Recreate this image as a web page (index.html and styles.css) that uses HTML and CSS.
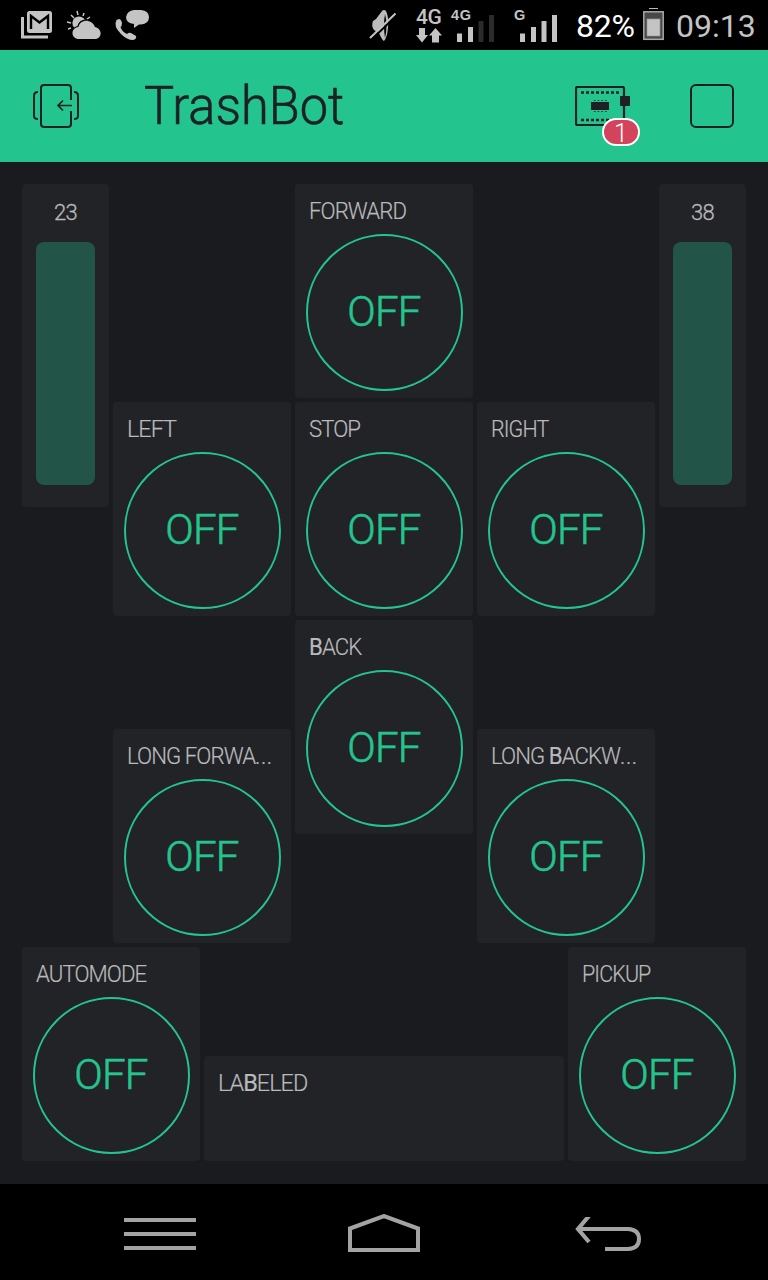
FILE: index.html
```
<!DOCTYPE html>
<html lang="en">
<head>
    <meta charset="UTF-8">
    <meta name="viewport" content="width=device-width, initial-scale=1.0">
    <title>TrashBot</title>
    <link rel="stylesheet" href="styles.css">
</head>
<body>

<div class="status-bar">
    <svg class="notifications" width="130" height="50" viewBox="20 0 130 50">
        <!-- mail -->
        <path d="M22.5 17V37H48" fill="none" stroke="#c4c4c4" stroke-width="3"/>
        <rect x="27" y="11" width="25" height="22" rx="2.5" fill="#c4c4c4"/>
        <path d="M31 29V16L39.5 22.5L48 16V29" fill="none" stroke="#000" stroke-width="2.4"/>
        <!-- weather -->
        <path d="M67 22L71 23M71 15L74 18M77 11L78 15M84 13L83 16M90 17L87 19M68 29L71 28" stroke="#c4c4c4" stroke-width="1.5"/>
        <circle cx="79" cy="23" r="6.6" fill="#c4c4c4"/>
        <path d="M79 39C71 39 70 28 78.500 27C80 18.500 92 18.500 95 27C103 29 102 39 95 39Z" fill="#c4c4c4" stroke="#000" stroke-width="2.400" paint-order="stroke"/>
        <!-- call -->
        <path d="M116.500 20L119 19Q121 19 122 23Q122 26 120.500 27Q122 32 127 34Q129 32 131 33L136 36Q137 39 133 40Q127 40 121 34Q113 26 116.500 20Z" fill="#c4c4c4"/>
        <path d="M134 10H141Q149 11 149 17Q149 24 141 24.500H139L134 28V24Q126 23 126 17Q127 11 134 10Z" fill="#c4c4c4"/>
    </svg>

    <svg class="mute" width="28" height="34" viewBox="369 9 28 34">
        <path d="M373 21L376 19L382 11Q384 9 386 11Q389 17 388 28Q387 38 384 41Q382 40 379 33L374 30Q371 26 373 21Z" fill="#bcbcbc"/>
        <path d="M385 14Q388 25 385 38Q383 25 385 14Z" fill="#000"/>
        <path d="M371 40L397 15" stroke="#000" stroke-width="2"/>
        <path d="M370 38L395.500 13.500" stroke="#c4c4c4" stroke-width="2"/>
    </svg>

    <div class="network">
        <span class="network-name">4G</span>
        <svg width="26" height="15" viewBox="0 0 26 15">
            <path d="M3 0H9V7H12L6 14.500L0 7H3ZM16 14.500H23V7.500H26L19.500 0L13 7.500H16Z" fill="#c4c4c4"/>
        </svg>
    </div>

    <div class="signal signal-4g">
        <span class="signal-name">4G</span>
        <svg width="37" height="28" viewBox="0 0 37 28">
            <path d="M0 18.500H5V27H0ZM11 12H16V27H11Z" fill="#c4c4c4"/>
            <path d="M21.500 6H26.500V27H21.500ZM32 0H37V27H32Z" fill="#2a2b2b"/>
        </svg>
    </div>

    <div class="signal signal-g">
        <span class="signal-name">G</span>
        <svg width="37" height="28" viewBox="0 0 37 28">
            <path d="M0 18.500H5V27H0ZM11 12H16V27H11ZM21.500 6H26.500V27H21.500ZM32 0H37V27H32Z" fill="#c4c4c4"/>
        </svg>
    </div>

    <span class="battery-level">82%</span>
    <svg class="battery" width="21" height="33" viewBox="0 0 21 33">
        <path d="M6 .5H15" stroke="#b8b8b8"/>
        <rect x=".8" y="3.800" width="19.400" height="27.500" fill="#484848" stroke="#a8a8a8" stroke-width="1.500"/>
        <rect x="4" y="11" width="13" height="17" fill="#c4c4c4" stroke="#999" stroke-width=".7"/>
    </svg>
    <span class="clock">09:13</span>
</div>

<div class="header">
    <svg class="exit-icon" width="46" height="44" viewBox="0 0 46 44" fill="none" stroke="#1d2024" stroke-width="2">
        <path d="M38 16V4Q38 1 35 1H11Q8 1 8 4V40Q8 43 11 43H35Q38 43 38 40V27"/>
        <path d="M5 8Q1 8 1 12V32Q1 35 5 35M41 8Q45 8 45 12V32Q45 35 41 35"/>
        <path d="M39 21.500H25M30 16.500L25 21.500L30 26.500" stroke-width="1.700"/>
    </svg>
    <h1 class="title">TrashBot</h1>
    <div class="device">
        <svg width="56" height="40" viewBox="0 0 56 40">
            <rect x="1" y="1" width="48" height="38" rx="1.500" fill="none" stroke="#1d2024" stroke-width="2.200"/>
            <path d="M6 6.500H45M6 34H45" stroke="#1d2024" stroke-width="2.500" stroke-dasharray="3 2"/>
            <path d="M19 14.500H32M19 25.500H32" stroke="#1d2024" stroke-width="1" stroke-dasharray="1.500 2.200"/>
            <path d="M16 16H34V24H16ZM45 10H55V20H45Z" fill="#1d2024"/>
        </svg>
        <span class="badge">1</span>
    </div>
    <div class="stop-icon"></div>
</div>

<div class="board">
    <div class="slider slider-left">
        <span class="value">23</span>
        <div class="track"></div>
    </div>
    <div class="slider slider-right">
        <span class="value">38</span>
        <div class="track"></div>
    </div>

    <div class="widget forward">
        <span class="label">FORWARD</span>
        <div class="switch">OFF</div>
    </div>
    <div class="widget left">
        <span class="label">LEFT</span>
        <div class="switch">OFF</div>
    </div>
    <div class="widget stop">
        <span class="label">STOP</span>
        <div class="switch">OFF</div>
    </div>
    <div class="widget right">
        <span class="label">RIGHT</span>
        <div class="switch">OFF</div>
    </div>
    <div class="widget back">
        <span class="label"><b>B</b>ACK</span>
        <div class="switch">OFF</div>
    </div>
    <div class="widget long-forward">
        <span class="label">LONG FORWA<i>...</i></span>
        <div class="switch">OFF</div>
    </div>
    <div class="widget long-backward">
        <span class="label">LONG <b>B</b>ACKW<i>...</i></span>
        <div class="switch">OFF</div>
    </div>
    <div class="widget automode">
        <span class="label">AUTOMODE</span>
        <div class="switch">OFF</div>
    </div>
    <div class="widget labeled">
        <span class="label">LA<b>B</b>ELED</span>
    </div>
    <div class="widget pickup">
        <span class="label">PICKUP</span>
        <div class="switch">OFF</div>
    </div>
</div>

<div class="nav-bar">
    <svg width="72" height="32" viewBox="0 0 72 32">
        <path d="M0 2H72M0 16H72M0 30H72" stroke="#a3a3a3" stroke-width="4"/>
    </svg>
    <svg class="home" width="72" height="38" viewBox="0 0 72 38">
        <path d="M2 14.500L36 2L70 14.500V36H2Z" fill="none" stroke="#a3a3a3" stroke-width="4"/>
    </svg>
    <svg class="return" width="66" height="34" viewBox="0 0 66 34" fill="none" stroke="#a3a3a3">
        <path d="M4 12H53Q64 12.500 64 22Q64 31.500 53 32H30" stroke-width="4"/>
        <path d="M14 -1L3 12L14 25" stroke-width="4.200"/>
    </svg>
</div>

</body>
</html>
```
FILE: styles.css
```
* {
    box-sizing: border-box;
}
body {
    margin: 0;
    width: 768px;
    height: 1280px;
    background: #1a1b1f;
    font-family: Roboto, 'Open Sans', sans-serif;
    font-weight: 300;
    overflow: hidden;
}
svg {
    display: block;
    flex-shrink: 0;
}
.status-bar {
    display: flex;
    align-items: flex-start;
    height: 50px;
    padding-left: 20px;
    background: #000;
    color: #c4c4c4;
    white-space: nowrap;
}
.mute {
    margin: 9px 0 0 219px;
}
.network {
    width: 28px;
    margin: 7px 0 0 19px;
}
.network-name {
    display: block;
    height: 21px;
    font: 500 21px/20px Roboto, sans-serif;
    letter-spacing: -0.5px;
}
.signal {
    position: relative;
    padding-top: 15px;
}
.signal-4g {
    width: 37px;
    margin-left: 13px;
}
.signal-g {
    width: 37px;
    margin-left: 26px;
}
.signal-name {
    position: absolute;
    top: 7px;
    left: -6px;
    font: bold 14.5px/16px 'Liberation Sans', sans-serif;
    letter-spacing: 0.6px;
}
.battery-level {
    width: 59px;
    margin-left: 19px;
    color: #fff;
    font-size: 32px;
    font-weight: 400;
    line-height: 52px;
    letter-spacing: -0.2px;
}
.battery {
    margin: 8px 0 0 8px;
}
.clock {
    margin-left: 12px;
    font-size: 32px;
    font-weight: 400;
    line-height: 52px;
}
.header {
    display: flex;
    align-items: center;
    height: 112px;
    padding: 0 34px 0 33px;
    background: #24c48e;
    color: #1d2024;
}
.title {
    width: 431px;
    margin: 0 0 0 65px;
    font-size: 54px;
    font-weight: 300;
    line-height: 112px;
    transform: scaleX(0.935);
    transform-origin: left;
    -webkit-text-stroke: 0.6px #1d2024;
}
.device {
    position: relative;
    width: 65px;
}
.badge {
    position: absolute;
    top: 32px;
    left: 27px;
    width: 38px;
    height: 28px;
    border: 2px solid #fff;
    border-radius: 14px;
    background: #d3435c;
    color: #fff;
    font-size: 25px;
    line-height: 28px;
    text-align: center;
}
.stop-icon {
    width: 44px;
    height: 44px;
    margin-left: auto;
    border: 2px solid #1d2024;
    border-radius: 6px;
}
.board {
    display: grid;
    grid-template-columns: repeat(8, 87px);
    grid-template-rows: repeat(9, 105px);
    gap: 4px;
    height: 1022px;
    padding: 22px;
}
.widget, .slider {
    display: flex;
    flex-direction: column;
    border-radius: 4px;
    background: #222327;
}
.slider {
    padding: 14px 14px 22px;
}
.value {
    height: 44px;
    color: #b9babb;
    font-size: 22px;
    line-height: 30px;
    text-align: center;
    letter-spacing: -0.7px;
    -webkit-text-stroke: 0.3px #b9babb;
}
.track {
    flex: 1;
    border-radius: 8px;
    background: #225447;
}
.label {
    height: 50px;
    margin-left: 13.5px;
    color: #b9babb;
    font-size: 24px;
    line-height: 55px;
    letter-spacing: -1px;
    white-space: nowrap;
    transform: scaleX(0.925);
    transform-origin: left;
    -webkit-text-stroke: 0.2px #b9babb;
}
.label b {
    font-weight: 400;
}
.label i {
    font-style: normal;
    letter-spacing: 0.6px;
}
.switch {
    width: 157px;
    height: 157px;
    margin-left: 10.5px;
    border: 2px solid #24c48e;
    border-radius: 50%;
    color: #24c48e;
    font-size: 42px;
    line-height: 151px;
    text-align: center;
    letter-spacing: -0.8px;
    -webkit-text-stroke: 0.6px #24c48e;
}
.slider-left {
    grid-area: 1 / 1 / span 3 / span 1;
}
.slider-right {
    grid-area: 1 / 8 / span 3 / span 1;
}
.forward {
    grid-area: 1 / 4 / span 2 / span 2;
}
.left {
    grid-area: 3 / 2 / span 2 / span 2;
}
.left .label, .labeled .label {
    transform: scaleX(0.975);
}
.stop {
    grid-area: 3 / 4 / span 2 / span 2;
}
.right {
    grid-area: 3 / 6 / span 2 / span 2;
}
.right .label, .pickup .label {
    transform: scaleX(0.895);
}
.back {
    grid-area: 5 / 4 / span 2 / span 2;
}
.long-forward {
    grid-area: 6 / 2 / span 2 / span 2;
}
.long-backward {
    grid-area: 6 / 6 / span 2 / span 2;
}
.automode {
    grid-area: 8 / 1 / span 2 / span 2;
}
.labeled {
    grid-area: 9 / 3 / span 1 / span 4;
}
.pickup {
    grid-area: 8 / 7 / span 2 / span 2;
}
.nav-bar {
    display: flex;
    align-items: center;
    height: 96px;
    padding: 4px 0 0 124px;
    background: #000;
}
.home {
    margin: 0 0 2px 152px;
}
.return {
    margin-left: 155px;
}
```
